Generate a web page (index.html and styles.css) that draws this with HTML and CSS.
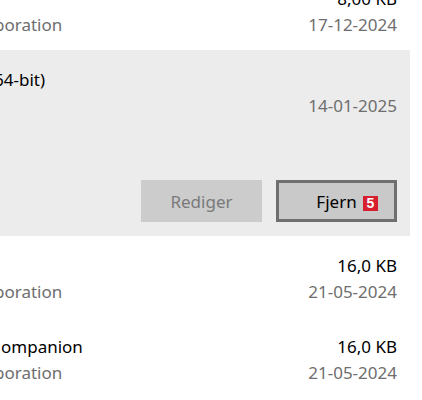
FILE: index.html
```html
<!DOCTYPE html>
<html lang="da">
<head>
<meta charset="utf-8">
<link rel="stylesheet" href="styles.css">
</head>
<body>
<div class="list">
  <div class="row first">
    <div class="line"><span class="name"></span><span class="size">8,00 KB</span></div>
    <div class="line sub"><span>poration</span><span>17-12-2024</span></div>
  </div>
  <div class="row selected">
    <div class="line"><span class="name">64-bit)</span><span class="size"></span></div>
    <div class="line sub"><span></span><span>14-01-2025</span></div>
    <div class="actions">
      <button class="btn disabled">Rediger</button>
      <button class="btn focus">Fjern<span class="badge">5</span></button>
    </div>
  </div>
  <div class="row">
    <div class="line"><span class="name"></span><span class="size">16,0 KB</span></div>
    <div class="line sub"><span>poration</span><span>21-05-2024</span></div>
  </div>
  <div class="row">
    <div class="line"><span class="name indent">ompanion</span><span class="size">16,0 KB</span></div>
    <div class="line sub"><span>poration</span><span>21-05-2024</span></div>
  </div>
</div>
</body>
</html>
```

FILE: styles.css
```css
html, body {
  margin: 0;
  padding: 0;
  background: #ffffff;
  overflow: hidden;
}
body {
  font-family: "Noto Sans", "Open Sans", sans-serif;
  font-size: 17px;
  color: #000000;
  width: 422px;
  height: 400px;
}
.list {
  width: 416px;
  margin-left: -6px;
}
.row {
  padding: 17px 13px 12px 0;
}
.row.first {
  margin-top: -31px;
}
.line {
  display: flex;
  justify-content: space-between;
  line-height: 26px;
  height: 26px;
  white-space: nowrap;
}
.line.sub {
  color: #6e6e6e;
}
.indent {
  padding-left: 7px;
}
.selected {
  background: #ececec;
  padding-bottom: 14px;
}
.actions {
  display: flex;
  justify-content: flex-end;
  gap: 14px;
  margin-top: 61px;
}
.btn {
  position: relative;
  width: 121px;
  height: 42px;
  box-sizing: border-box;
  font-family: "Noto Sans", "Open Sans", sans-serif;
  font-size: 17px;
  background: #cccccc;
  border: 0;
  padding: 0;
}
.btn.disabled {
  color: #7a7a7a;
}
.btn.focus {
  color: #000000;
  border: 3px solid #6f6f6f;
  background: #c9c9c9;
}
.badge {
  position: absolute;
  left: 84px;
  top: 13px;
  width: 15px;
  height: 15px;
  background: #d7202f;
  color: #ffffff;
  font-family: "Liberation Sans", sans-serif;
  font-weight: bold;
  font-size: 14px;
  line-height: 15px;
  text-align: center;
}
```
